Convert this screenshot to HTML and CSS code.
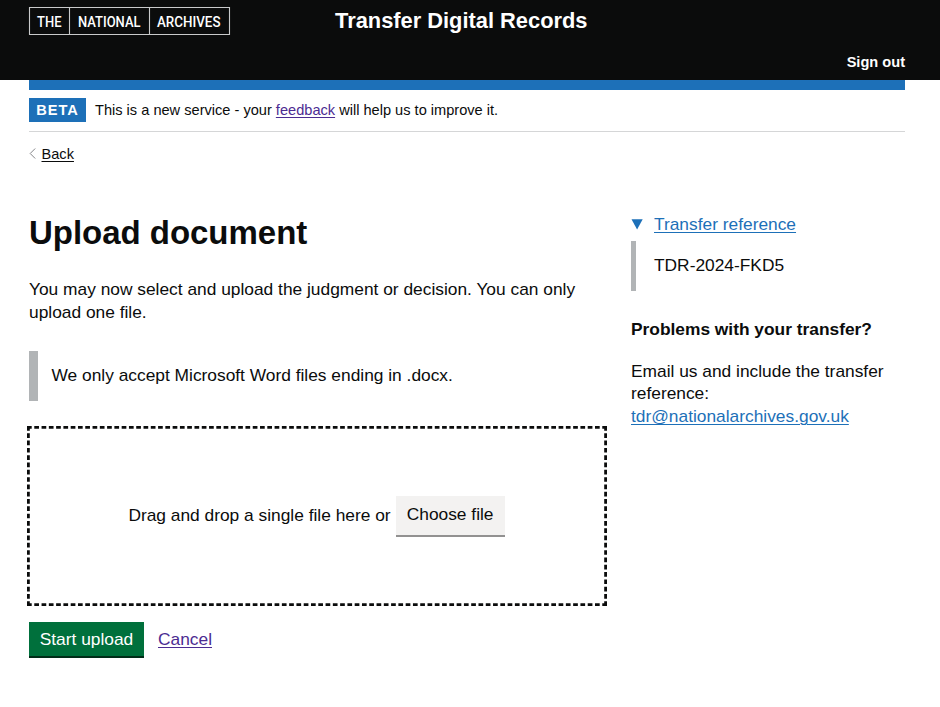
FILE: index.html
```html
<!DOCTYPE html>
<html lang="en">
<head>
<meta charset="utf-8">
<title>Upload document - Transfer Digital Records</title>
<link rel="stylesheet" href="styles.css">
</head>
<body>
<header class="header">
  <div class="container header-inner">
    <svg class="logo" width="201" height="28" viewBox="0 0 201 28" role="img" aria-label="The National Archives">
      <path d="M.5.5h200v27H.5zM40.5.5v27M120.5.5v27" fill="none" stroke="#c9cacb" stroke-width="1.1"/>
      <text x="8" y="19.7" textLength="24.5" lengthAdjust="spacingAndGlyphs">THE</text>
      <text x="49" y="19.7" textLength="62.5" lengthAdjust="spacingAndGlyphs">NATIONAL</text>
      <text x="128" y="19.7" textLength="63.5" lengthAdjust="spacingAndGlyphs">ARCHIVES</text>
    </svg>
    <div class="service">Transfer Digital Records</div>
    <a class="signout" href="#">Sign out</a>
  </div>
</header>
<div class="container">
  <div class="blue-bar"></div>
  <div class="phase">
    <strong class="tag">BETA</strong>
    <span class="phase-text">This is a new service - your <a class="visited" href="#">feedback</a> will help us to improve it.</span>
  </div>
  <a class="back" href="#"><svg width="7" height="11" viewBox="0 0 7 11"><path d="M6.2.5 1.2 5.5l5 5" fill="none" stroke="#858688" stroke-width="1"/></svg><span>Back</span></a>
  <div class="columns">
    <main class="main">
      <h1>Upload document</h1>
      <p class="intro">You may now select and upload the judgment or decision. You can only upload one file.</p>
      <div class="inset">We only accept Microsoft Word files ending in .docx.</div>
      <div class="drop">
        <svg class="outline" width="580" height="180" viewBox="0 0 580 180">
          <path d="M0 1.4H580M0 178.6H580" stroke-dasharray="4.7 2.582"/>
          <path d="M1.4 0V180M578.6 0V180" stroke-dasharray="4.7 2.604"/>
        </svg>
        <span>Drag and drop a single file here or</span>
        <button class="choose" type="button">Choose file</button>
      </div>
      <div class="actions">
        <button class="start" type="button">Start upload</button>
        <a class="visited" href="#">Cancel</a>
      </div>
    </main>
    <aside class="side">
      <div class="summary"><svg width="12" height="11" viewBox="0 0 12 11"><path d="M.5.2h11.2L6.1 10.6z" fill="#1d70b8"/></svg><a href="#">Transfer reference</a></div>
      <div class="details">TDR-2024-FKD5</div>
      <h2>Problems with your transfer?</h2>
      <p>Email us and include the transfer reference: <a href="#">tdr@nationalarchives.gov.uk</a></p>
    </aside>
  </div>
</div>
</body>
</html>
```
FILE: styles.css
```css
* { box-sizing: border-box; }
body {
  margin: 0;
  background: #fff;
  color: #0b0c0c;
  font: 17.35px/22.8px "Liberation Sans", Arial, sans-serif;
}
a {
  color: #1d70b8;
  text-decoration: underline;
  text-decoration-thickness: 1px;
  text-underline-offset: 2px;
}
a.visited { color: #4c2c92; }
h1, h2, p { margin: 0; }
button { font: inherit; border: 0; }
.container { width: 876px; margin-left: 29px; }
.header { height: 80px; background: #0b0c0c; color: #fff; }
.header-inner { height: 80px; display: grid; grid-template: 41px 39px / 306px 1fr; }
.logo { margin-top: 7px; overflow: visible; }
.logo text { font: 500 15.5px Roboto, sans-serif; fill: #fff; }
.service { font-size: 21.85px; font-weight: 700; line-height: 42px; white-space: nowrap; }
.signout {
  grid-column: 2;
  justify-self: end;
  color: #fff;
  font-size: 14.6px;
  font-weight: 700;
  line-height: 42px;
  text-decoration: none;
}
.blue-bar { height: 9.5px; background: #1d70b8; }
.phase {
  height: 42px;
  padding-top: 8.5px;
  display: flex;
  align-items: flex-start;
  border-bottom: 1px solid #d5d6d7;
}
.tag {
  width: 57px;
  height: 23.5px;
  background: #1d70b8;
  color: #fff;
  font-size: 14.6px;
  line-height: 25px;
  letter-spacing: 1px;
  text-align: center;
}
.phase-text { margin-left: 9px; font-size: 14.6px; line-height: 24px; }
.back {
  display: flex;
  align-items: center;
  gap: 5.5px;
  width: 50px;
  margin-top: 12px;
  height: 20px;
  color: #0b0c0c;
  font-size: 14.6px;
  line-height: 20px;
  text-decoration: none;
}
.back span { text-decoration: underline; text-underline-offset: 2px; }
.columns { display: flex; margin-top: 49.5px; }
.main { width: 578px; flex: none; }
h1 { padding-top: 1px; font-size: 33px; line-height: 38px; letter-spacing: -.03px; }
.intro { margin-top: 26px; }
.inset {
  margin-top: 27px;
  padding: 13px 13.5px;
  height: 50px;
  border-left: 9px solid #b1b4b6;
}
.drop {
  position: relative;
  width: 580px;
  height: 180px;
  margin: 25px 0 0 -2px;
  padding-right: 1px;
  display: flex;
  align-items: center;
  justify-content: center;
  gap: 5px;
}
.outline { position: absolute; inset: 0; }
.outline path { fill: none; stroke: #0b0c0c; stroke-width: 2.8; }
.choose {
  width: 109px;
  height: 41px;
  margin-top: 2px;
  padding: 0 0 3px;
  background: #f3f2f1;
  color: #0b0c0c;
  border-bottom: 2px solid #929191;
}
.actions { display: flex; align-items: center; gap: 14px; margin-top: 16px; }
.start {
  width: 115px;
  height: 36px;
  padding: 2px 0 0;
  background: #00703c;
  color: #fff;
  border-bottom: 2px solid #002d18;
}
.side { width: 274px; margin-left: 24px; }
.summary { display: flex; align-items: center; gap: 11px; }
.details { height: 50px; margin-top: 5px; padding: 13px 18px; border-left: 5px solid #b1b4b6; }
h2 { margin-top: 27px; font-size: 17.35px; line-height: 22.8px; }
.side p { margin-top: 19px; }
```
